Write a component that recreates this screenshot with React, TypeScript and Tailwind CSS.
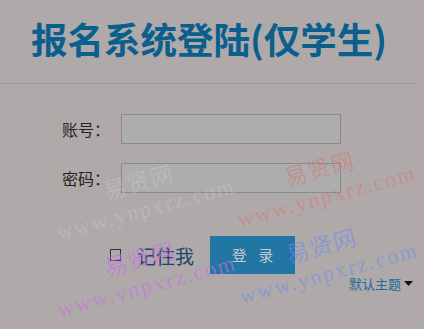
import React from "react";

function Watermark({ pos, color }: { pos: string; color: string }) {
  return (
    <div
      className={`pointer-events-none absolute -translate-x-1/2 -translate-y-1/2 -rotate-[15deg] flex flex-col items-center leading-none ${pos} ${color}`}
    >
      <span className="text-[23px] tracking-[1px] font-['Noto_Sans_CJK_SC',serif]">易贤网</span>
      <span className="mt-[7px] text-[22px] tracking-[2px] font-['Liberation_Serif',serif]">www.ynpxrz.com</span>
    </div>
  );
}

export default function App() {
  return (
    <div className="relative w-[424px] h-[329px] overflow-hidden bg-[#afaaa9] font-['Noto_Sans_CJK_SC',sans-serif]">
      <div className="w-[418px]">
        <h1 className="pt-[19px] text-center text-[36.5px] leading-[40px] font-bold text-[#0b5f8c]">
          报名系统登陆(仅学生)
        </h1>
        <div className="mt-[24px] h-px bg-[#9d9998]" />
      </div>

      <div className="pl-[62px] pt-[30px] flex flex-col gap-[19px]">
        <div className="flex items-center gap-[11px]">
          <span className="w-[48px] text-[16px] leading-none text-[#222]">账号：</span>
          <div className="w-[220px] h-[30px] border border-[#8a8a8a] bg-[#adadad]" />
        </div>
        <div className="flex items-center gap-[11px]">
          <span className="w-[48px] text-[16px] leading-none text-[#222]">密码：</span>
          <div className="w-[220px] h-[30px] border border-[#8a8a8a] bg-[#adadad]" />
        </div>
      </div>

      <div className="pl-[110px] pt-[43px] flex items-center">
        <div className="w-[11px] h-[12px] border-[1.5px] border-[#2b2f5c]" />
        <span className="ml-[16px] text-[19px] leading-none text-[#1f4468]">记住我</span>
        <button className="ml-[16px] w-[85px] h-[38px] bg-[#2176a4] text-[15px] text-[#c9c9c9] tracking-[4px] pl-[4px]">
          登 录
        </button>
      </div>

      <div className="mt-[3px] pl-[349px] flex items-center">
        <span className="text-[13px] leading-none text-[#1d6b98]">默认主题</span>
        <svg className="ml-[3px]" width="9" height="5" viewBox="0 0 9 5">
          <path d="M0 0 L9 0 L4.5 5 Z" fill="#111" />
        </svg>
      </div>

      <Watermark pos="left-[142px] top-[195px]" color="text-[rgba(230,230,230,0.22)]" />
      <Watermark pos="left-[323px] top-[182px]" color="text-[rgba(220,110,110,0.45)]" />
      <Watermark pos="left-[325px] top-[259px]" color="text-[rgba(110,140,235,0.55)]" />
      <Watermark pos="left-[143px] top-[272px]" color="text-[rgba(200,110,230,0.6)]" />
    </div>
  );
}
